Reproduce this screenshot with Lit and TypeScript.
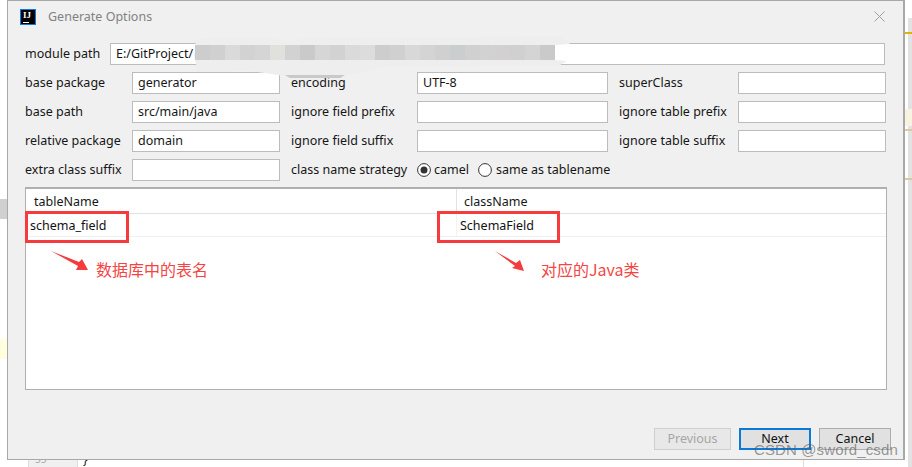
import { LitElement, html, css, svg } from "lit";
import { customElement } from "lit/decorators.js";

const MOSAIC = ["#cdcdcd","#d0d0d0","#dadada","#d2d2d2","#d5d5d5","#e0e0dd","#d2d2d2","#cacaca","#d6d6d6","#d2d2d2","#dadada","#dcdcdc","#cdcdcd","#d0d0d0","#d8d8d8","#d4d4d4","#d0d0d0","#cbcece","#d0d0d0","#d2d2d2","#d2d0d0","#d0d0d0","#d4d4d4","#cacaca"];

@customElement("app-root")
export class AppRoot extends LitElement {
  static styles = css`
    :host { display: block; position: relative; width: 912px; height: 467px; overflow: hidden; background: #fff;
      font-family: "Noto Sans", "Open Sans", sans-serif; font-size: 12.5px; color: #161616; }
    .bg { position: absolute; }
    .strip { left: 908px; top: 18px; width: 4px; height: 449px; background: #e2e2e2; }
    .mark1 { left: 905px; top: 32px; width: 7px; height: 2px; background: #e0b400; }
    .mark2 { left: 905px; top: 109px; width: 7px; height: 17px; background: #f8f3e0; }
    .mark3 { left: 905px; top: 129px; width: 7px; height: 2px; background: #d8cba0; }
    .mark4 { left: 905px; top: 178px; width: 7px; height: 2px; background: #d8cba0; }
    .left1 { left: 0; top: 199px; width: 7px; height: 20px; background: #d0d0d0; }
    .left2 { left: 0; top: 339px; width: 7px; height: 20px; background: #ffffe0; }
    .gutter { left: 28px; top: 455px; width: 50px; height: 12px; box-sizing: border-box; background: #f0f0f0;
      border-left: 1px solid #ddd; border-right: 1px solid #ddd; color: #aaa; font-size: 10px; line-height: 8px; padding-left: 6px; }
    .brace { left: 83px; top: 453px; font-size: 12px; line-height: 14px; color: #222; }
    .vline { left: 803px; top: 460px; width: 1px; height: 7px; background: #ddd; }

    .dialog { position: relative; margin-left: 7px; width: 898px; height: 460px; box-sizing: border-box;
      border: 1px solid #a8a8a8; border-width: 1px 2px 1px 1px; background: #f0f0f0; display: flex; flex-direction: column; padding: 0 18px 0 17px; }
    .title { height: 31px; margin: 0 0 11px -5px; display: flex; align-items: center; gap: 12px; color: #828282; font-size: 12.5px; }
    .logo { width: 16px; height: 16px; flex: none; box-sizing: border-box; border: 1px solid #0a7ae0; background: #000; color: #fff;
      font: bold 9px/9px "Liberation Serif", serif; padding: 1px 0 0 2px; position: relative; }
    .logo::after { content: ""; position: absolute; left: 2px; bottom: 1px; width: 6px; height: 1px; background: #fff; }
    .name { flex: 1; }
    .close { width: 11px; height: 11px; flex: none; margin-top: -1px; }
    .path { display: flex; align-items: center; height: 22px; margin-bottom: 7px; }
    .path .lab { width: 85px; flex: none; padding-bottom: 2px; }
    .path input { flex: 1; min-width: 0; }
    .grid { display: grid; grid-template-columns: 107px 148px 137px 191px 130px 148px; grid-auto-rows: 22px; row-gap: 7px; align-items: center; }
    .grid span { padding-bottom: 2px; }
    .l2 { padding-left: 11px; white-space: nowrap; }
    input { box-sizing: border-box; width: 100%; height: 22px; border: 1px solid #bcbcbc; background: #fff; padding: 0 5px 2px;
      font: inherit; color: #161616; outline: none; margin: 0; border-radius: 0; }
    .radios { grid-column: 4 / 7; display: flex; align-items: center; }
    .radio { width: 14px; height: 14px; flex: none; }
    .camel { margin: 0 9px 0 3px; }
    .plain { margin-left: 4px; }

    .table { margin-top: 6px; width: 862px; height: 203px; box-sizing: border-box; background: #fff; border: 1px solid #b0b0b0; border-top-width: 2px; }
    .head, .row { display: grid; grid-template-columns: 430px 1fr; }
    .head { height: 24px; border-bottom: 1px solid #e2e2e2; align-items: center; }
    .head span { padding-left: 8px; height: 100%; display: flex; align-items: center; }
    .head span + span { border-left: 1px solid #e2e2e2; padding-left: 7px; }
    .row { height: 22px; border-bottom: 1px solid #f0f0f0; align-items: center; }
    .row span { box-sizing: border-box; padding: 1px 0 0 4px; height: 100%; display: flex; align-items: center; color: #111; }
    .row span + span { border-left: 1px solid #f3f3f3; padding-left: 3px; }

    .foot { margin: 38px -6px 0 0; display: flex; justify-content: flex-end; gap: 8px; }
    .btn { box-sizing: border-box; height: 22px; width: 72px; border: 1px solid #adadad; background: #e1e1e1; font: inherit; color: #111;
      padding: 0 0 2px; margin: 0; }
    .prev { width: 77px; color: #a6a6a6; border-color: #cfcfcf; background: #e8e8e8; }
    .next { border: 2px solid #0a7ad6; }

    .halo { left: 190px; top: 36px; width: 385px; height: 44px; background: #eeeeee;
      clip-path: polygon(6px 4px, 20px 2px, 80px 2px, 100px 6px, 112px 2px, 370px 0, 380px 8px, 365px 9px, 365px 24px, 377px 25px, 370px 29px, 195px 31px, 155px 40px, 95px 40px, 60px 35px, 8px 36px, 4px 20px); }
    .mosaic { left: 195px; top: 45px; display: flex; height: 15px; }
    .mosaic i { display: block; width: 15px; height: 15px; }
    .hole { left: 555px; top: 45px; width: 16px; height: 15px; background: #fff; }
    .smudge { left: 285px; top: 75px; width: 60px; height: 3px; background: #c9c9c9; clip-path: polygon(0 0, 100% 0, 92% 100%, 8% 100%); }

    .box { box-sizing: border-box; border: 3px solid #f53b3b; }
    .box1 { left: 25px; top: 211px; width: 104px; height: 32px; }
    .box2 { left: 437px; top: 211px; width: 123px; height: 32px; }
    .note { color: #f54444; font-size: 16px; line-height: 20px; font-family: "Noto Sans CJK SC", "Noto Sans", sans-serif; white-space: nowrap; }
    .note1 { left: 96px; top: 259px; }
    .note2 { left: 541px; top: 259px; }
    .arrows { left: 0; top: 0; width: 912px; height: 467px; pointer-events: none; }
    .wm { left: 754px; top: 441px; color: rgba(90,90,90,0.62); font: 15px/18px "Liberation Sans", sans-serif; letter-spacing: 0.12px; white-space: nowrap; }
  `;

  private field(label: string, value = "", cls = "") {
    return html`<span class=${cls}>${label}</span><input value=${value} />`;
  }

  render() {
    return html`
      <div class="bg strip"></div><div class="bg mark1"></div><div class="bg mark2"></div><div class="bg mark3"></div><div class="bg mark4"></div>
      <div class="bg left1"></div><div class="bg left2"></div>
      <div class="bg gutter">55</div><div class="bg brace">}</div><div class="bg vline"></div>

      <div class="dialog">
        <div class="title">
          <div class="logo">IJ</div>
          <div class="name">Generate Options</div>
          <svg class="close" viewBox="0 0 11 11"><path d="M.5.5l10 10M10.5.5l-10 10" stroke="#a0a0a0" stroke-width="1" fill="none"/></svg>
        </div>
        <div class="path"><span class="lab">module path</span><input value="E:/GitProject/" /></div>
        <div class="grid">
          ${this.field("base package", "generator")}${this.field("encoding", "UTF-8", "l2")}${this.field("superClass", "", "l2")}
          ${this.field("base path", "src/main/java")}${this.field("ignore field prefix", "", "l2")}${this.field("ignore table prefix", "", "l2")}
          ${this.field("relative package", "domain")}${this.field("ignore field suffix", "", "l2")}${this.field("ignore table suffix", "", "l2")}
          ${this.field("extra class suffix")}<span class="l2">class name strategy</span>
          <div class="radios">
            <svg class="radio" viewBox="0 0 14 14"><circle cx="7" cy="7" r="6.4" fill="#fff" stroke="#333"/><circle cx="7" cy="7" r="3.5" fill="#333"/></svg>
            <span class="camel">camel</span>
            <svg class="radio" viewBox="0 0 14 14"><circle cx="7" cy="7" r="6.4" fill="#fff" stroke="#333"/></svg>
            <span class="plain">same as tablename</span>
          </div>
        </div>
        <div class="table">
          <div class="head"><span>tableName</span><span>className</span></div>
          <div class="row"><span>schema_field</span><span>SchemaField</span></div>
        </div>
        <div class="foot">
          <button class="btn prev">Previous</button>
          <button class="btn next">Next</button>
          <button class="btn">Cancel</button>
        </div>
      </div>

      <div class="bg halo"></div>
      <div class="bg mosaic">${MOSAIC.map((c) => html`<i style="background:${c}"></i>`)}</div>
      <div class="bg hole"></div>
      <div class="bg smudge"></div>

      <div class="bg box box1"></div>
      <div class="bg box box2"></div>
      <svg class="bg arrows" viewBox="0 0 912 467">
        ${svg`<polygon fill="#f53b3b" points="51,251 79,262 82,259 88,270 76,270 78,266"/>`}
        ${svg`<polygon fill="#f53b3b" points="495,251 516,263 520,260 524,271 512,268 515,266"/>`}
      </svg>
      <div class="bg note note1">数据库中的表名</div>
      <div class="bg note note2">对应的Java类</div>
      <div class="bg wm">CSDN @sword_csdn</div>
    `;
  }
}
